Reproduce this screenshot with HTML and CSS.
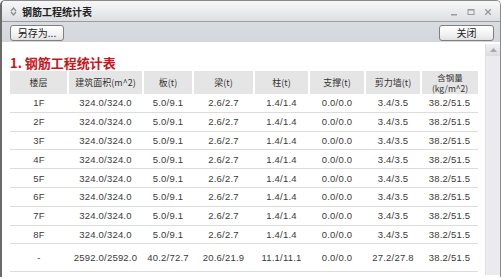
FILE: index.html
```html
<!DOCTYPE html>
<html>

<head>
    <title>钢筋工程统计表</title>
    <link rel="stylesheet" href="styles.css">
</head>

<body>
    <div class="window">
        <div class="title-bar">
            <svg class="title-icon" width="7" height="9" viewBox="0 0 7 9">
                <path d="M1 4 L3.5 1 L6 4 M1 5 L3.5 8 L6 5" fill="none" stroke="#8a8a8a" stroke-width="1.2"/>
            </svg>
            <div class="title-text">钢筋工程统计表</div>
            <div class="title-controls">
                <svg width="8" height="8" viewBox="0 0 8 8">
                    <rect x="1" y="6" width="6" height="1.5" fill="#9a9a9a"/>
                </svg>
                <svg width="8" height="8" viewBox="0 0 8 8">
                    <rect x="1" y="1.5" width="6" height="5" fill="none" stroke="#9a9a9a" stroke-width="1"/>
                    <rect x="1" y="1" width="6" height="1.6" fill="#9a9a9a"/>
                </svg>
                <svg width="8" height="8" viewBox="0 0 8 8">
                    <path d="M1.2 1.2 L6.8 6.8 M6.8 1.2 L1.2 6.8" stroke="#9a9a9a" stroke-width="1.4"/>
                </svg>
            </div>
        </div>
        <div class="tool-bar">
            <button class="tool-button save-button">另存为...</button>
            <button class="tool-button close-button">关闭</button>
        </div>
        <div class="main">
            <div class="content">
                <h1 class="report-title">1. 钢筋工程统计表</h1>
                <table class="stats-table">
                    <colgroup>
                        <col style="width:58px">
                        <col style="width:75px">
                        <col style="width:50px">
                        <col style="width:61px">
                        <col style="width:55px">
                        <col style="width:56px">
                        <col style="width:56px">
                        <col style="width:57px">
                    </colgroup>
                    <thead>
                        <tr>
                            <th>楼层</th>
                            <th>建筑面积(m^2)</th>
                            <th>板(t)</th>
                            <th>梁(t)</th>
                            <th>柱(t)</th>
                            <th>支撑(t)</th>
                            <th>剪力墙(t)</th>
                            <th class="two-line">含钢量<br>(kg/m^2)</th>
                        </tr>
                    </thead>
                    <tbody id="rows"></tbody>
                </table>
            </div>
            <div class="scrollbar">
                <div class="scroll-up">
                    <svg width="7" height="4" viewBox="0 0 7 4">
                        <path d="M0 4 L3.5 0 L7 4 Z" fill="#a8a8a8"/>
                    </svg>
                </div>
                <div class="scroll-track"></div>
            </div>
        </div>
    </div>

    <script>
        const floors = ['1F', '2F', '3F', '4F', '5F', '6F', '7F', '8F'];
        const floorValues = ['324.0/324.0', '5.0/9.1', '2.6/2.7', '1.4/1.4', '0.0/0.0', '3.4/3.5', '38.2/51.5'];
        const totalValues = ['2592.0/2592.0', '40.2/72.7', '20.6/21.9', '11.1/11.1', '0.0/0.0', '27.2/27.8', '38.2/51.5'];
        const rowsBody = document.getElementById('rows');

        let html = '';
        floors.forEach(floor => {
            html += `<tr><td>${floor}</td>${floorValues.map(v => `<td>${v}</td>`).join('')}</tr>`;
        });
        html += `<tr class="total-row"><td>-</td>${totalValues.map(v => `<td>${v}</td>`).join('')}</tr>`;
        rowsBody.innerHTML = html;
    </script>
</body>

</html>
```

FILE: styles.css
```css
body {
    margin: 0;
    padding: 0;
    background-color: #fff;
    font-family: "Liberation Sans", "Noto Sans CJK SC", sans-serif;
    color: #333;
}

.window {
    width: 501px;
    height: 277px;
    box-sizing: border-box;
    border-left: 2px solid #6a6a6a;
    border-right: 1px solid #8a8a8a;
    border-top: 1px solid #8a8a8a;
    border-radius: 5px 5px 0 0;
    display: flex;
    flex-direction: column;
    overflow: hidden;
}

.title-bar {
    height: 20px;
    display: flex;
    align-items: center;
    background: linear-gradient(#f7f7f8, #ebecee 50%, #dcdee2);
    border-bottom: 1px solid #9a9ca0;
    padding-left: 8px;
    padding-right: 8px;
}

.title-icon {
    margin-right: 5px;
}

.title-text {
    font-size: 10px;
    font-weight: bold;
    color: #222;
    flex: 1;
}

.title-controls {
    display: flex;
    gap: 9px;
    padding-top: 2px;
}

.tool-bar {
    height: 20px;
    display: flex;
    justify-content: space-between;
    align-items: center;
    padding: 0 6px 0 8px;
    background: linear-gradient(#d9dce1, #d3d6db);
}

.tool-button {
    height: 16px;
    margin-top: 2px;
    padding: 0;
    font-family: "Noto Sans CJK SC", sans-serif;
    font-size: 10px;
    line-height: 14px;
    color: #222;
    border: 1px solid #808080;
    border-radius: 3px;
    background: linear-gradient(#ffffff, #f2f2f2 60%, #e2e2e2);
}

.save-button {
    width: 54px;
}

.close-button {
    width: 55px;
}

.main {
    flex: 1;
    display: flex;
    background-color: #fff;
}

.content {
    flex: 1;
    padding: 12px 0 0 8px;
}

.report-title {
    margin: 0;
    font-family: "Noto Sans CJK SC", sans-serif;
    font-size: 13px;
    line-height: 17px;
    font-weight: bold;
    color: #c8161d;
}

.stats-table {
    width: 468px;
    table-layout: fixed;
    border-collapse: collapse;
}

.stats-table th {
    height: 23px;
    padding: 0;
    background-color: #e5e5e5;
    border-left: 2px solid #fff;
    font-family: "Noto Sans CJK SC", "Liberation Sans", sans-serif;
    font-size: 9px;
    line-height: 11px;
    font-weight: normal;
    color: #333;
    text-align: center;
}

.stats-table th.two-line {
    font-size: 8.5px;
    line-height: 10.5px;
}

.stats-table th:first-child {
    border-left: none;
}

.stats-table td {
    height: 17.8px;
    padding: 0;
    border-bottom: 1px solid #dcdcdc;
    font-size: 9.5px;
    letter-spacing: 0.2px;
    text-align: center;
    color: #3a3a3a;
}

.stats-table .total-row td {
    height: 27px;
}

.scrollbar {
    width: 14px;
    margin-top: 2px;
    margin-bottom: 2px;
    display: flex;
    flex-direction: column;
    background-color: #ebebef;
    border-left: 1px solid #dddde2;
}

.scroll-up {
    height: 12px;
    display: flex;
    align-items: center;
    justify-content: center;
    background: linear-gradient(#f2f2f4, #dcdce0);
}

.scroll-track {
    flex: 1;
}
```
